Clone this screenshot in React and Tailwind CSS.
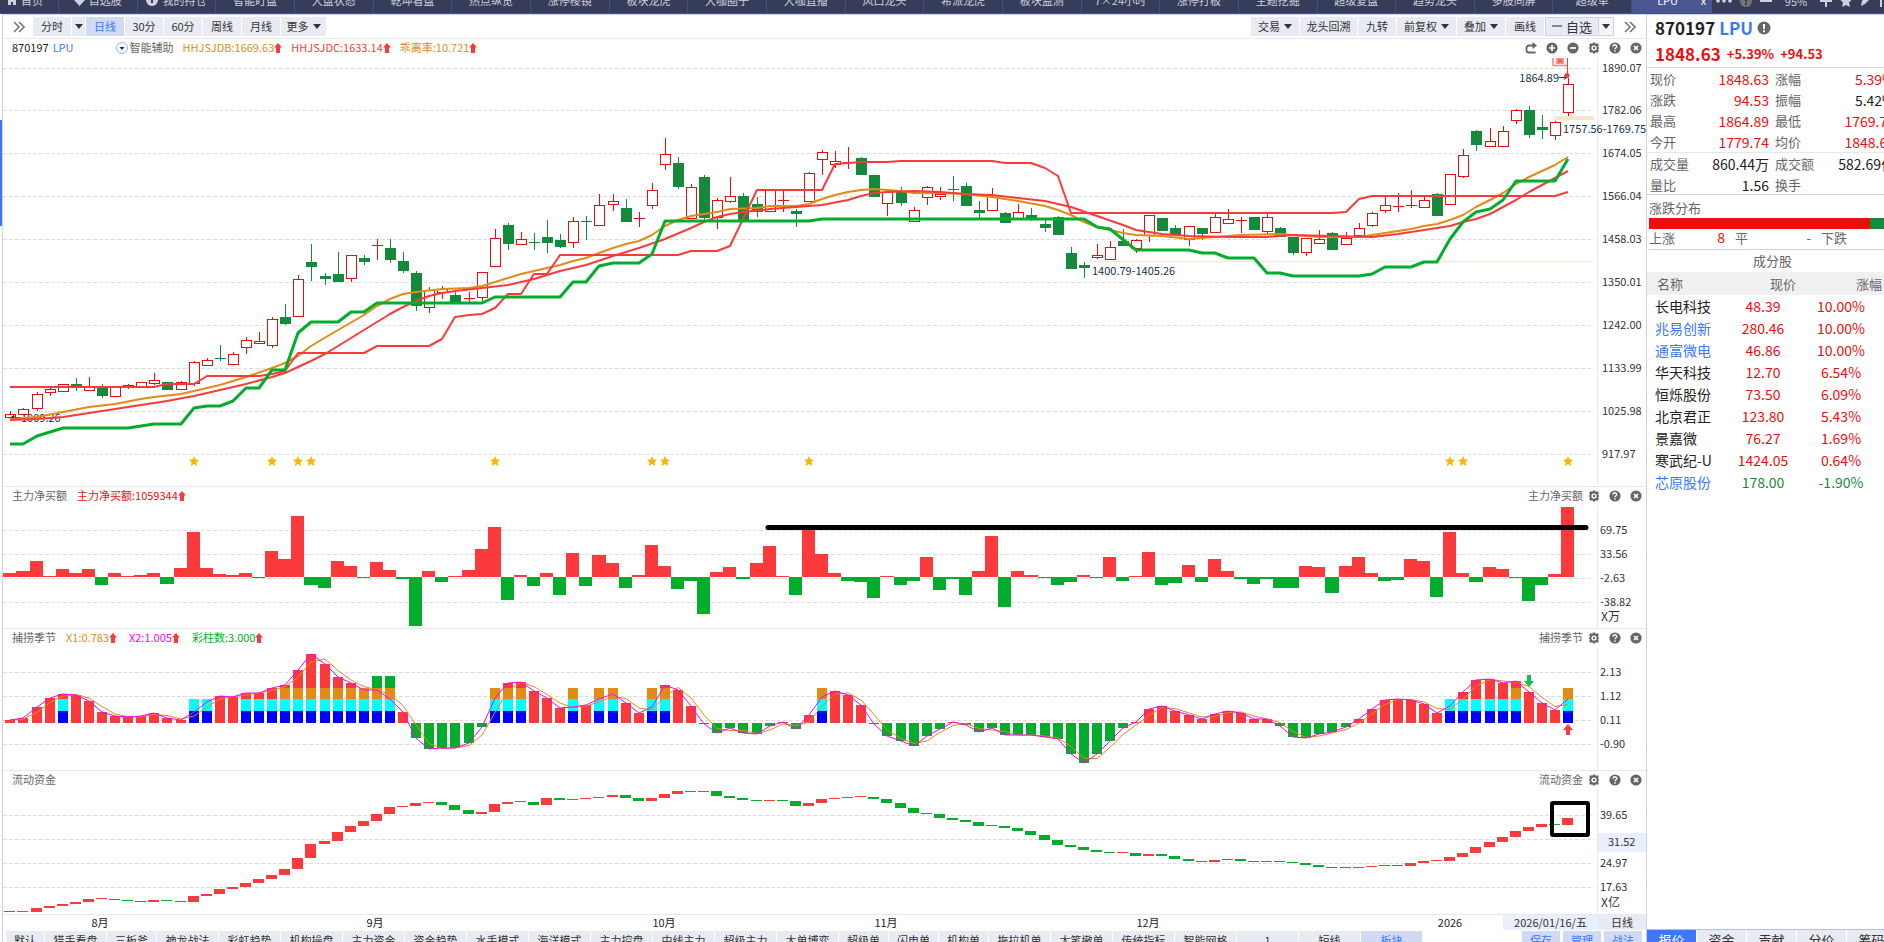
import React from 'react';

const RED = '#fb3b3b';
const GREEN = '#02ad2b';
const UP = '#ee0d0d';
const DOWN = '#168a3c';
const ORANGE = '#e28b16';
const GRID = '#dddddd';

const STEP = 13.09;
const cx = (i) => Math.round(10.4 + i * STEP);

const NAV = [
  '自选股', '我的持仓', '智能盯盘', '大盘状态', '乾坤看盘', '热点纵览', '涨停棱镜', '板块龙虎', '大咖圈子', '大咖直播',
  '风口龙头', '希派龙虎', '板块监测', '7×24小时', '涨停打板', '主题挖掘', '超级复盘', '趋势龙头', '多股同屏', '超级单',
];

// [high, body top, body bottom, low, 1 = up / 0 = down]
const CANDLES = [
  [411, 414, 418, 418, 1], [408, 409, 415, 415, 1], [392, 394, 409, 411, 1], [388, 389, 393, 396, 1], [384, 384, 392, 392, 1],
  [378, 384, 386, 391, 0], [377, 387, 391, 391, 1], [384, 387, 396, 398, 0], [387, 387, 397, 397, 1], [384, 385, 386, 389, 1],
  [382, 382, 387, 387, 1], [373, 380, 384, 385, 1], [382, 382, 390, 390, 0], [381, 382, 390, 390, 1], [361, 362, 384, 386, 1],
  [358, 360, 366, 366, 1], [345, 358, 359, 361, 0], [352, 354, 365, 365, 1], [337, 340, 348, 354, 1], [332, 341, 344, 344, 1],
  [317, 319, 346, 348, 1], [304, 317, 324, 325, 0], [275, 279, 317, 317, 1], [244, 262, 267, 281, 0], [273, 276, 279, 285, 0],
  [252, 274, 282, 282, 0], [255, 255, 279, 282, 1], [255, 258, 262, 265, 0], [239, 245, 245, 260, 1], [239, 248, 260, 263, 0],
  [252, 261, 271, 273, 0], [271, 273, 306, 311, 0], [287, 290, 308, 313, 1], [286, 289, 293, 299, 1], [292, 295, 302, 302, 0],
  [292, 298, 298, 302, 1], [272, 272, 298, 301, 1], [229, 238, 267, 267, 1], [223, 225, 244, 250, 0], [232, 239, 245, 245, 1],
  [233, 242, 242, 250, 0], [220, 237, 243, 253, 0], [234, 240, 247, 248, 0], [217, 221, 243, 248, 1], [216, 221, 221, 240, 0],
  [194, 205, 226, 226, 1], [194, 201, 205, 211, 1], [199, 208, 222, 222, 0], [212, 218, 218, 227, 1], [183, 190, 206, 209, 1],
  [138, 154, 165, 170, 1], [157, 163, 187, 189, 0], [184, 187, 219, 219, 1], [175, 177, 218, 220, 0], [198, 200, 218, 229, 1],
  [177, 196, 202, 203, 1], [193, 196, 221, 221, 0], [197, 204, 212, 217, 0], [190, 190, 212, 212, 1], [190, 200, 200, 212, 1],
  [209, 211, 214, 227, 0], [172, 173, 202, 202, 1], [150, 152, 160, 175, 1], [151, 161, 165, 168, 1], [147, 162, 163, 169, 1],
  [157, 158, 175, 175, 0], [175, 175, 197, 197, 0], [192, 192, 204, 216, 1], [187, 191, 203, 206, 0], [207, 210, 222, 222, 1],
  [186, 187, 198, 205, 1], [187, 194, 197, 200, 1], [176, 189, 189, 201, 0], [183, 186, 206, 206, 0], [201, 210, 213, 219, 0],
  [188, 195, 211, 211, 1], [212, 213, 223, 223, 0], [204, 212, 219, 219, 1], [208, 215, 220, 221, 0], [220, 224, 228, 232, 0],
  [216, 217, 235, 235, 0], [247, 253, 269, 269, 0], [262, 265, 268, 278, 0], [244, 255, 258, 259, 1], [241, 247, 260, 260, 1],
  [229, 241, 246, 246, 0], [239, 240, 249, 253, 1], [215, 215, 236, 242, 1], [218, 218, 231, 231, 0], [225, 228, 235, 236, 0],
  [226, 226, 240, 246, 1], [228, 228, 234, 240, 0], [212, 217, 233, 233, 1], [209, 219, 224, 224, 1], [217, 220, 221, 233, 1],
  [217, 217, 230, 230, 0], [214, 217, 232, 235, 1], [227, 228, 237, 237, 0], [237, 237, 253, 255, 0], [238, 238, 253, 256, 1],
  [230, 239, 244, 244, 1], [232, 233, 250, 250, 0], [232, 238, 245, 245, 1], [223, 228, 236, 236, 1], [212, 213, 226, 227, 1],
  [197, 205, 211, 213, 1], [193, 206, 206, 212, 1], [190, 205, 205, 208, 1], [197, 200, 208, 208, 1], [193, 194, 216, 216, 0],
  [174, 174, 205, 205, 1], [149, 155, 177, 178, 1], [130, 131, 145, 151, 0], [128, 141, 147, 147, 1], [126, 131, 147, 147, 1],
  [109, 110, 121, 124, 1], [106, 110, 135, 138, 0], [115, 127, 130, 139, 0], [121, 122, 136, 140, 1], [78, 84, 113, 116, 1],
];

// [candle index, y]
const SUPPORT = [
  [0, 444], [1, 444], [2, 436], [4, 428], [9, 428], [11, 424], [13, 424], [14, 408], [15, 406], [16, 406], [17, 401], [18, 388],
  [19, 388], [20, 370], [21, 370], [22, 333], [23, 322], [25, 322], [26, 312], [27, 312], [28, 303], [36, 303], [37, 297], [42, 297],
  [43, 282], [44, 282], [45, 266], [46, 263], [48, 263], [49, 254], [50, 221], [61, 221], [62, 219], [82, 219], [83, 227], [84, 229],
  [86, 250], [90, 250], [91, 253], [92, 253], [93, 258], [95, 258], [96, 273], [97, 273], [98, 276], [103, 276], [104, 274],
  [105, 267], [107, 267], [108, 262], [109, 262], [110, 239], [111, 222], [112, 212], [113, 209], [114, 200], [115, 181], [118, 181],
  [119, 159],
];

const CHANNEL = [
  [0, 387], [11, 387], [12, 384], [14, 384], [15, 376], [19, 376], [20, 374], [21, 371], [22, 353], [27, 353], [28, 346], [32, 346],
  [33, 339], [34, 317], [35, 315], [36, 314], [37, 308], [38, 294], [39, 294], [40, 274], [41, 274], [42, 255], [51, 255], [52, 251],
  [54, 251], [55, 246], [57, 190], [62, 190], [63, 164], [65, 162], [67, 162], [68, 161], [75, 161], [76, 163], [78, 163], [79, 168],
  [80, 176], [81, 213], [101, 213], [102, 212], [103, 199], [104, 196], [118, 196], [119, 192],
];

const FAST_MA = [
  [0, 419], [2, 417], [4, 412], [6, 407], [8, 404], [10, 399], [11, 397], [13, 394], [14, 391], [16, 385], [18, 377], [20, 368],
  [21, 363], [22, 356], [23, 346], [25, 330], [27, 315], [28, 306], [29, 299], [30, 294], [31, 292], [33, 289], [35, 288], [36, 286],
  [37, 282], [38, 278], [39, 274], [40, 271], [42, 265], [43, 261], [44, 258], [45, 253], [46, 248], [47, 244], [48, 241], [49, 235],
  [50, 226], [51, 220], [52, 216], [53, 214], [54, 212], [55, 209], [57, 208], [58, 206], [60, 206], [61, 204], [62, 199], [63, 195],
  [64, 192], [65, 190], [66, 189], [67, 190], [68, 191], [69, 193], [71, 193], [73, 194], [75, 197], [77, 201], [79, 206], [80, 210],
  [81, 215], [82, 222], [83, 227], [84, 230], [85, 233], [86, 235], [88, 236], [90, 239], [92, 237], [94, 235], [97, 234], [100, 237],
  [103, 237], [104, 235], [105, 233], [107, 229], [108, 226], [109, 224], [110, 220], [111, 215], [112, 207], [113, 200], [114, 193],
  [115, 184], [116, 177], [117, 171], [118, 165], [119, 157],
];

const SLOW_MA = [
  [0, 420], [2, 419], [4, 417], [6, 413], [8, 409], [10, 405], [12, 401], [14, 396], [16, 390], [18, 384], [20, 377], [21, 373],
  [22, 367], [23, 361], [24, 354], [25, 346], [26, 338], [27, 330], [28, 322], [29, 314], [30, 307], [31, 301], [32, 296], [33, 293],
  [34, 291], [36, 288], [38, 285], [40, 279], [42, 271], [44, 265], [46, 256], [48, 248], [50, 239], [52, 228], [53, 222], [54, 217],
  [55, 214], [56, 212], [58, 209], [60, 207], [62, 205], [64, 200], [65, 196], [66, 193], [67, 192], [69, 191], [71, 192], [73, 194],
  [75, 195], [77, 198], [79, 201], [81, 207], [83, 216], [85, 225], [86, 230], [88, 234], [90, 236], [93, 237], [96, 237], [98, 235],
  [101, 236], [104, 237], [106, 234], [108, 230], [109, 228], [110, 226], [111, 222], [112, 219], [113, 214], [114, 207], [115, 200],
  [116, 192], [117, 185], [118, 178], [119, 171],
];

const STARS = [14, 20, 22, 23, 37, 49, 50, 61, 110, 111, 119];

const NET_BUY = [
  4, 6, 16, 1, 8, 4, 8, -8, 4, 1, 2, 4, -7, 9, 45, 9, 3, 2, 4, -1, 26, 18, 61, -8, -11, 16, 11, -1, 15, 7,
  -2, -49, 6, -5, 1, 7, 28, 50, -23, 2, -9, 4, -18, 24, -9, 22, 14, -11, 2, 32, 11, -12, -4, -37, 5, 10, -2, 14, 31, 1,
  -18, 49, 23, 4, -4, -5, -21, 1, -8, -4, 20, -13, -2, -18, 6, 41, -30, 6, 2, -1, -8, -5, 2, -1, 20, -4, 1, 25, -8, -6,
  12, -5, 18, 6, -2, -7, -2, -11, -11, 11, 10, -16, 11, 20, 4, -4, -3, 18, 16, -20, 45, 4, -5, 10, 8, -1, -24, -8, 3, 70,
];

const SEASON = [
  3, 5, 16, 25, 29, 28, 22, 11, 7, 6, 7, 10, 5, 3, 11, 21, 27, 26, 30, 30, 35, 38, 53, 69, 59, 46, 40, 33, 33, 24,
  11, -15, -26, -25, -25, -20, -4, 25, 40, 41, 32, 25, 15, 16, 18, 24, 29, 20, 10, 16, 38, 33, 17, -1, -10, -5, -10, -11, -3, 1,
  -6, 8, 26, 32, 28, 18, -1, -13, -18, -23, -13, -6, 1, -2, -9, -5, -12, -12, -12, -14, -16, -31, -40, -31, -18, -5, 1, 14, 17, 12,
  8, 4, 9, 12, 10, 4, 4, -3, -14, -15, -11, -9, -4, 4, 14, 23, 24, 23, 19, 10, 17, 31, 43, 44, 40, 42, 31, 20, 13, 24,
];

// number of coloured blocks stacked on a bar
const STACKS = {
  4: 2, 14: 2, 15: 2, 18: 2, 19: 2, 20: 2, 21: 3, 22: 3, 23: 3, 24: 3, 25: 3, 26: 3, 27: 3, 28: 4, 29: 4, 37: 3, 38: 3, 39: 3,
  43: 3, 45: 3, 46: 3, 49: 3, 50: 3, 62: 3, 110: 2, 111: 2, 112: 2, 113: 2, 114: 2, 115: 3, 119: 3,
};

const BLOCKS = [
  [711, 12, '#0000ff'],
  [699, 12, '#00ffff'],
  [688, 11, ORANGE],
  [676, 12, GREEN],
];

const FLOW = [
  [911, 912, 0], [911, 912, 1], [908, 912, 1], [906, 908, 1], [904, 906, 1], [902, 904, 1], [899, 902, 1], [898, 899, 1],
  [899, 900, 0], [900, 901, 0], [901, 902, 0], [900, 902, 1], [900, 901, 0], [901, 902, 0], [896, 902, 1], [894, 896, 1],
  [889, 894, 1], [887, 889, 1], [883, 887, 1], [879, 883, 1], [875, 879, 1], [869, 875, 1], [858, 869, 1], [844, 858, 1],
  [841, 844, 1], [832, 841, 1], [826, 832, 1], [821, 826, 1], [814, 821, 1], [807, 814, 1], [806, 807, 1], [803, 806, 1],
  [802, 803, 1], [802, 805, 0], [805, 810, 0], [810, 814, 0], [812, 814, 1], [804, 812, 1], [802, 804, 1], [801, 802, 1],
  [802, 805, 0], [798, 805, 1], [798, 800, 0], [799, 800, 1], [798, 799, 1], [797, 798, 1], [795, 797, 1], [795, 798, 0],
  [798, 801, 0], [798, 801, 1], [794, 798, 1], [791, 794, 1], [791, 792, 0], [791, 792, 1], [791, 796, 0], [796, 798, 0],
  [798, 800, 0], [800, 801, 0], [800, 801, 1], [800, 801, 0], [801, 806, 0], [803, 806, 1], [799, 803, 1], [798, 799, 1],
  [797, 798, 1], [796, 797, 1], [797, 799, 0], [799, 803, 0], [803, 808, 0], [808, 813, 0], [813, 814, 0], [814, 818, 0],
  [818, 820, 0], [820, 822, 0], [822, 826, 0], [825, 826, 0], [826, 828, 0], [828, 831, 0], [831, 835, 0], [835, 840, 0],
  [840, 845, 0], [845, 847, 0], [847, 850, 0], [850, 852, 0], [852, 853, 0], [852, 853, 1], [853, 856, 0], [854, 856, 1],
  [854, 856, 0], [856, 859, 0], [859, 861, 0], [861, 862, 0], [860, 862, 1], [859, 860, 1], [859, 861, 0], [861, 862, 0],
  [861, 862, 1], [861, 862, 0], [862, 863, 0], [863, 865, 0], [865, 867, 0], [867, 868, 0], [867, 868, 0], [867, 868, 1],
  [866, 867, 1], [865, 866, 0], [865, 866, 0], [863, 866, 1], [861, 863, 1], [860, 861, 1], [857, 861, 1], [853, 857, 1],
  [847, 853, 1], [842, 847, 1], [837, 842, 1], [831, 837, 1], [827, 831, 1], [824, 827, 1], [824, 825, 0], [818, 825, 1],
];

const STOCKS = [
  ['长电科技', '48.39', '10.00%'],
  ['兆易创新', '280.46', '10.00%', true],
  ['通富微电', '46.86', '10.00%', true],
  ['华天科技', '12.70', '6.54%'],
  ['恒烁股份', '73.50', '6.09%'],
  ['北京君正', '123.80', '5.43%'],
  ['景嘉微', '76.27', '1.69%'],
  ['寒武纪-U', '1424.05', '0.64%'],
  ['芯原股份', '178.00', '-1.90%', true],
];

const TEMPLATES = [
  '猎手看盘', '三板斧', '神龙战法', '彩虹趋势', '机构操盘', '主力资金', '资金趋势', '水手模式', '海洋模式', '主力控盘', '中线主力',
  '超级主力', '大单博弈', '超级单', '闪电单', '机构单', '拖拉机单', '大笔撤单', '传统指标', '智能网格', '1', '短线',
];

const toPoints = (list) => list.map(([i, y]) => `${cx(i)},${y}`).join(' ');

/* ---------- icons ---------- */

const Caret = () => (
  <svg className="w-2 h-[5px] shrink-0" viewBox="0 0 8 5"><path d="M0 0h8L4 5z" fill="#333" /></svg>
);

const Chevrons = () => (
  <svg className="w-3 h-3" viewBox="0 0 12 12" fill="none" stroke="#777" strokeWidth="1.6">
    <path d="M1 1l5 5-5 5M6 1l5 5-5 5" />
  </svg>
);

const UpArrow = () => (
  <svg className="w-2 h-[10px] shrink-0" viewBox="0 0 8 10"><path d="M4 0L8 4.500H6V10H2V4.500H0z" fill={RED} /></svg>
);

const Round = ({ children }) => (
  <svg className="w-3 h-3" viewBox="0 0 12 12">
    <circle cx="6" cy="6" r="5.6" fill="#666" />
    <g stroke="#fff" strokeWidth="1.7" fill="none">{children}</g>
  </svg>
);

const Gear = () => (
  <svg className="w-3 h-3" viewBox="0 0 12 12">
    <path
      d="M2.2 1.2L4.4 1.8 5 .6h2l.6 1.2 2.2-.6 1 1.8L10 4.8l1.4 1.2L10 7.2l.8 1.8-1 1.8-2.2-.6L7 11.4H5l-.6-1.2-2.2.6-1-1.8.8-1.8L.6 6 2 4.8 1.2 3z"
      fill="#666"
    />
    <circle cx="6" cy="6" r="2.6" fill="#fff" />
    <circle cx="6" cy="6" r="1.2" fill="#666" />
  </svg>
);

const Help = () => (
  <Round><path d="M4.2 4.7c0-2.6 3.6-2.4 3.6-.3C7.8 5.6 6 5.8 6 7.2M6 8.2v1.5" strokeWidth="1.4" /></Round>
);

const Close = () => <Round><path d="M4 4l4 4M8 4l-4 4" /></Round>;

const IconButton = ({ label, children }) => (
  <button type="button" aria-label={label} className="w-[21px] flex justify-center">{children}</button>
);

const PanelTools = ({ title }) => (
  <div className="ml-auto flex items-center">
    {title && <span className="text-[#666]">{title}</span>}
    <IconButton label="设置"><Gear /></IconButton>
    <IconButton label="帮助"><Help /></IconButton>
    <IconButton label="关闭"><Close /></IconButton>
  </div>
);

/* ---------- chart pieces ---------- */

const Axis = ({ top, bottom, ticks, x = 1600 }) => (
  <g>
    {ticks.map(([y, label]) => (
      <g key={y}>
        <path d={`M3 ${y + 0.5}H1594`} stroke={GRID} strokeDasharray="4 2" />
        {label && <text x={x} y={y + 4} fill="#333">{label}</text>}
      </g>
    ))}
    <path d={`M1597.5 ${top}V${bottom}`} stroke="#e6e8f0" />
  </g>
);

const Candle = ({ i, data: [high, top, bottom, low, up] }) => {
  const x = cx(i);
  const h = bottom - top;
  if (up && h > 1) {
    return (
      <g stroke={UP} fill="none">
        <path d={`M${x + 0.5} ${high}V${top}M${x + 0.5} ${bottom}V${low}`} />
        <rect x={x - 4.5} y={top + 0.5} width="10" height={h - 1} fill="#fff" />
      </g>
    );
  }
  return (
    <g fill={up ? UP : DOWN}>
      <rect x={x} y={high} width="1" height={low - high} />
      <rect x={x - 5} y={top} width="11" height={Math.max(h, 1)} />
    </g>
  );
};

const MainChart = () => (
  <svg className="block w-full text-[11px]" viewBox="3 58 1643 428">
    <Axis
      top={58}
      bottom={485}
      x={1602}
      ticks={[
        [68, '1890.07'], [110, '1782.06'], [153, '1674.05'], [196, '1566.04'], [239, '1458.03'],
        [282, '1350.01'], [325, '1242.00'], [368, '1133.99'], [411, '1025.98'], [454, '917.97'],
      ]}
    />
    <path d="M1084 261.5H1594" stroke="#fde6cf" />
    <rect x="1555" y="116" width="39" height="4" fill="#fde4cb" />
    {CANDLES.map((c, i) => <Candle key={i} i={i} data={c} />)}
    <g fill="#15324a">
      <path d="M11 417.5H21M11 417.5l3-2v4z" stroke="#15324a" />
      <text x="21" y="422">1009.26</text>
      <text x="1092" y="275">1400.79-1405.26</text>
      <text x="1559" y="82" textAnchor="end">1864.89</text>
      <path d="M1559 77.5h7M1564 75.5l3 2-3 2" stroke="#15324a" fill="none" />
      <text x="1563" y="133">1757.56-1769.75</text>
    </g>
    <g fill="none" strokeLinejoin="round">
      <polyline points={toPoints(FAST_MA)} stroke={ORANGE} strokeWidth="2" />
      <polyline points={toPoints(SLOW_MA)} stroke={RED} strokeWidth="2" />
      <polyline points={toPoints(CHANNEL)} stroke={RED} strokeWidth="2" />
      <polyline points={toPoints(SUPPORT)} stroke={GREEN} strokeWidth="3" />
    </g>
    <path d="M1553 58V65.5H1568" stroke="#fb8080" strokeWidth="1.5" fill="none" />
    <rect x="1556" y="58" width="8" height="6" fill="#fb9090" />
    <path d="M1558 60h4M1558 62h4" stroke="#e84040" />
    <path d="M1567.5 58V75" stroke={RED} />
    <circle cx="1567" cy="75.500" r="2.500" fill={RED} />
    {STARS.map((i) => (
      <path
        key={i}
        transform={`translate(${cx(i)} 461)`}
        d="M0-5L1.500-1.600 5-1.300 2.400 1.200 3.200 5 0 3-3.200 5-2.400 1.200-5-1.300-1.500-1.600z"
        fill="#f7b500"
      />
    ))}
  </svg>
);

const NetBuyChart = () => (
  <svg className="block w-full text-[11px]" viewBox="3 506 1643 122">
    <Axis top={506} bottom={627} ticks={[[530, '69.75'], [554, '33.56'], [578, '-2.63'], [602, '-38.82']]} />
    <text x="1601" y="621" className="text-[12px]" fill="#333">X万</text>
    {NET_BUY.map((v, i) => {
      const x = cx(i) - 7;
      return (
        <rect key={i} x={x} y={v > 0 ? 577 - v : 577} width={cx(i + 1) - 7 - x} height={Math.abs(v)} fill={v > 0 ? RED : GREEN} />
      );
    })}
    <path d="M768 527.500H1586" stroke="#000" strokeWidth="5" strokeLinecap="round" />
  </svg>
);

const SeasonChart = () => {
  const fast = SEASON.map((v, i) => [i, 723 - v]);
  const slow = SEASON.map((v, i) => [i, 723 - (v + (i ? SEASON[i - 1] : v)) / 2]);
  return (
    <svg className="block w-full text-[11px]" viewBox="3 648 1643 122">
      <Axis top={648} bottom={769} ticks={[[672, '2.13'], [696, '1.12'], [720, '0.11'], [744, '-0.90']]} />
      {SEASON.map((v, i) => (
        <g key={i}>
          <rect x={cx(i) - 5} y={v > 0 ? 723 - v : 723} width="10" height={Math.abs(v)} fill={v > 0 ? RED : GREEN} />
          {BLOCKS.slice(0, STACKS[i] || 0).map(([y, h, fill]) => (
            <rect key={y} x={cx(i) - 5} y={y} width="10" height={h} fill={fill} />
          ))}
        </g>
      ))}
      <polyline points={toPoints(slow)} fill="none" stroke={ORANGE} />
      <polyline points={toPoints(fast)} fill="none" stroke="#ff00ff" />
      <path d="M1527 675h4v6h3l-5 6-5-6h3z" fill="#12c152" />
      <path d="M1566 735h4v-5h3l-5-6-5 6h3z" fill={RED} />
    </svg>
  );
};

const FlowChart = () => (
  <svg className="block w-full text-[11px]" viewBox="3 790 1643 124">
    <rect x="1598" y="833" width="48" height="19" fill="#e9effc" />
    <Axis top={790} bottom={913} ticks={[[815, '39.65'], [839, ''], [863, '24.97'], [887, '17.63']]} />
    <text x="1608" y="846" fill="#333">31.52</text>
    <text x="1601" y="907" className="text-[12px]" fill="#333">X亿</text>
    {FLOW.map(([top, bottom, up], i) => (
      <rect key={i} x={cx(i) - 6} y={top} width="11" height={bottom - top} fill={up ? RED : GREEN} />
    ))}
    <rect x="1552" y="803" width="36" height="32" rx="1" fill="none" stroke="#000" strokeWidth="4" />
  </svg>
);

const Panel = ({ children }) => <section className="border-t border-[#e6e8f0]">{children}</section>;

const PanelHeader = ({ children }) => (
  <div className="h-[19px] pl-[9px] pb-[2px] flex items-center leading-none whitespace-nowrap">{children}</div>
);

const Reading = ({ className, children }) => (
  <span className={`flex items-center ${className}`}>{children}<UpArrow /></span>
);

/* ---------- bars ---------- */

const TopBar = () => (
  <header className="h-[14px] shrink-0 flex items-end overflow-hidden bg-[#363c59] border-b border-[#434f8c] text-[11px] text-[#cfd2dc] whitespace-nowrap">
    <nav className="flex-1 h-[26px] flex">
      <a href="#home" className="w-[59px] pr-2 flex items-center justify-center gap-1 border-r border-[#43507c]">
        <svg className="w-[10px] h-[10px]" viewBox="0 0 10 10"><path d="M5 0l5 5H9v5H6V7H4v3H1V5H0z" fill="#cfd2dc" /></svg>
        首页
      </a>
      {NAV.map((item, i) => (
        <a key={item} href={`#${item}`} className="flex-1 flex items-center justify-center gap-1 border-r border-[#43507c]">
          {i === 0 && (
            <svg className="w-[11px] h-[11px]" viewBox="0 0 11 11"><path d="M5.500 11L0 5V2l2-2h2l1.500 1L7 0h2l2 2v3z" fill="#cfd2dc" /></svg>
          )}
          {i === 1 && (
            <svg className="w-3 h-3" viewBox="0 0 12 12">
              <circle cx="6" cy="6" r="6" fill="#cfd2dc" />
              <path d="M6 3v6" stroke="#363c59" strokeWidth="2" />
            </svg>
          )}
          {item}
        </a>
      ))}
      <a href="#LPU" className="w-20 flex items-center justify-between pl-[25px] pr-[6px] bg-[#4a5690] text-white">
        LPU<span>x</span>
      </a>
    </nav>
    <div className="w-[172px] h-6 flex items-center gap-2 pl-1 shrink-0 overflow-hidden">
      <svg className="w-4 h-3 shrink-0" viewBox="0 0 16 12" fill="#cfd2dc">
        <circle cx="2" cy="6" r="1.800" /><circle cx="8" cy="6" r="1.800" /><circle cx="14" cy="6" r="1.800" />
      </svg>
      <svg className="w-3 h-3 shrink-0" viewBox="0 0 12 12">
        <circle cx="6" cy="6" r="6" fill="#77736e" />
        <path d="M6 2v5M6 8v2" stroke="#363c59" strokeWidth="2" />
      </svg>
      <svg className="w-3 h-3 shrink-0" viewBox="0 0 12 12"><path d="M0 6h12" stroke="#cfd2dc" strokeWidth="2" /></svg>
      <span className="w-8 text-center shrink-0">95%</span>
      <svg className="w-3 h-3 shrink-0" viewBox="0 0 12 12"><path d="M0 6h12M6 0v12" stroke="#cfd2dc" strokeWidth="2" /></svg>
      <svg className="w-3 h-3 shrink-0" viewBox="-6 -6 12 12"><path d="M0-6l2 4 4 .5-3 3L4 6 0 4-4 6l1-4.500-3-3L-2-2z" fill="#cfd2dc" /></svg>
      <svg className="w-3 h-3 shrink-0" viewBox="0 0 12 12"><path d="M1 11l1-5 6-6 3 3-6 6z" fill="#cfd2dc" /></svg>
      <svg className="w-3 h-3 shrink-0" viewBox="0 0 12 12"><path d="M1 12V3h10" fill="none" stroke="#cfd2dc" strokeWidth="2" /></svg>
    </div>
  </header>
);

const ToolButton = ({ width = 'w-[38px]', active, caret, children }) => (
  <button
    type="button"
    className={`${width} h-[19px] pb-px flex items-center justify-center gap-1 leading-none ${active ? 'bg-[#d0daf5] text-[#3b78fb]' : 'bg-[#e9ebf4]'}`}
  >
    {children}
    {caret && <Caret />}
  </button>
);

const Toolbar = () => (
  <div className="h-6 flex items-center gap-px border-t border-[#d3d6ea] pr-[10px] whitespace-nowrap">
    <button type="button" aria-label="展开" className="w-[29px] pl-[10px]"><Chevrons /></button>
    <ToolButton>分时</ToolButton>
    <ToolButton width="w-[13px]"><Caret /></ToolButton>
    <ToolButton active>日线</ToolButton>
    <ToolButton>30分</ToolButton>
    <ToolButton>60分</ToolButton>
    <ToolButton>周线</ToolButton>
    <ToolButton>月线</ToolButton>
    <ToolButton width="w-[45px]" caret>更多</ToolButton>
    <div className="ml-auto flex items-center gap-px">
      <ToolButton width="w-12" caret>交易</ToolButton>
      <ToolButton width="w-[57px]">龙头回溯</ToolButton>
      <ToolButton>九转</ToolButton>
      <ToolButton width="w-[59px]" caret>前复权</ToolButton>
      <ToolButton width="w-12" caret>叠加</ToolButton>
      <ToolButton>画线</ToolButton>
      <div className="flex border border-[#cdd2e8]">
        <button type="button" className="w-[52px] h-[17px] pb-px flex items-center justify-center gap-1 bg-[#e9ebf4] text-[13px] leading-none">
          <span className="w-[10px] h-[2px] bg-[#888]" />
          自选
        </button>
        <button type="button" aria-label="更多自选" className="w-[15px] flex items-center justify-center bg-[#f4f5fa] border-l border-[#cdd2e8]">
          <Caret />
        </button>
      </div>
      <button type="button" aria-label="收起" className="pl-[9px]"><Chevrons /></button>
    </div>
  </div>
);

const MONTHS = [[100, '8月'], [375, '9月'], [664, '10月'], [886, '11月'], [1148, '12月'], [1450, '2026']];

const DateRow = () => (
  <div className="h-[17px] flex items-start border-t border-[#e6e8f0]">
    <svg className="flex-1 h-4 text-[11px]" viewBox="3 914 1500 16">
      {MONTHS.map(([x, label]) => <text key={x} x={x} y="926" textAnchor="middle" fill="#222">{label}</text>)}
    </svg>
    <div className="w-[95px] h-[15px] pb-px flex items-center justify-center bg-[#e9effc] leading-none">2026/01/16/五</div>
    <div className="w-12 h-[15px] pb-px flex items-center justify-center bg-[#e9ebf4] leading-none">日线</div>
  </div>
);

const TAB_WIDTHS = { 1: 'w-[61px]', 2: 'w-[61px]', 3: 'w-[49px]', 4: 'w-[61px]' };

const TemplateTabs = () => (
  <div className="h-[18px] pl-[3px] pr-1 flex gap-px whitespace-nowrap leading-none">
    <button type="button" className="w-[38px] shrink-0 bg-[#e9ebf4]">默认</button>
    {TEMPLATES.map((name) => (
      <button key={name} type="button" className={`${TAB_WIDTHS[name.length]} shrink-0 bg-[#e9ebf4]`}>{name}</button>
    ))}
    <button type="button" className="w-[61px] shrink-0 bg-[#d0daf5] text-[#3b78fb]">板块</button>
    <div className="ml-auto flex gap-[3px] text-[#3b78fb]">
      <button type="button" className="w-[38px] bg-[#d0daf5]">保存</button>
      <button type="button" className="w-[38px] bg-[#d0daf5]">管理</button>
      <button type="button" className="w-[38px] bg-[#d0daf5]">战法</button>
    </div>
  </div>
);

/* ---------- quote panel ---------- */

const QuoteRow = ({ cells: [a, av, b, bv], red = [true, true] }) => (
  <div className="h-[21px] w-[248px] pl-[3px] flex items-center">
    <span className="w-12 text-[13px] text-[#666]">{a}</span>
    <span className={`w-[71px] text-right ${red[0] ? 'text-[#ee0d0d]' : 'text-[#222]'}`}>{av}</span>
    <span className="w-12 ml-[6px] text-[13px] text-[#666]">{b}</span>
    <span className={`flex-1 text-right ${red[1] ? 'text-[#ee0d0d]' : 'text-[#222]'}`}>{bv}</span>
  </div>
);

const QuotePanel = () => (
  <aside className="w-[238px] shrink-0 flex flex-col overflow-hidden border-l border-t border-[#cdd2e8] text-[14px] leading-none whitespace-nowrap">
    <div className="h-[53px] shrink-0 pl-2 border-b border-[#d8dbea]">
      <h1 className="h-[25px] flex items-center gap-1 text-[17px] font-bold text-[#222]">
        870197 <span className="text-[#3b78fb]">LPU</span>
        <svg className="w-[14px] h-[14px]" viewBox="0 0 14 14">
          <circle cx="7" cy="7" r="6.500" fill="#666" />
          <path d="M7 3v5M7 9.200v2" stroke="#fff" strokeWidth="2" />
        </svg>
      </h1>
      <p className="h-[26px] flex items-center gap-[6px] font-bold text-[#ee0d0d]">
        <span className="text-[17px]">1848.63</span>
        <span className="text-[13px]">+5.39%</span>
        <span className="text-[13px]">+94.53</span>
      </p>
    </div>
    <div className="border-b border-[#e6e8f0]">
      <QuoteRow cells={['现价', '1848.63', '涨幅', '5.39%']} />
      <QuoteRow cells={['涨跌', '94.53', '振幅', '5.42%']} red={[true, false]} />
      <QuoteRow cells={['最高', '1864.89', '最低', '1769.75']} />
      <QuoteRow cells={['今开', '1779.74', '均价', '1848.63']} />
    </div>
    <div className="h-[42px] shrink-0 border-b border-[#cdd2e8]">
      <QuoteRow cells={['成交量', '860.44万', '成交额', '582.69亿']} red={[false, false]} />
      <QuoteRow cells={['量比', '1.56', '换手', '']} red={[false, false]} />
    </div>
    <div className="ml-[2px] border-b border-[#cdd2e8] text-[13px] text-[#666]">
      <div className="h-[23px] flex items-end pb-1">涨跌分布</div>
      <div className="h-[11px] flex">
        <div className="w-[221px] bg-[#ee0d0d]" />
        <div className="flex-1 bg-[#168a3c]" />
      </div>
      <div className="h-5 pb-1 flex items-center">
        <span className="w-12">上涨</span>
        <span className="w-7 text-right text-[14px] text-[#ee0d0d]">8</span>
        <span className="w-12 ml-[10px]">平</span>
        <span className="w-7 text-right text-[#168a3c]">-</span>
        <span className="ml-[10px]">下跌</span>
      </div>
    </div>
    <table className="w-full table-fixed border-collapse">
      <caption className="h-[22px] pl-[14px] text-[13px] leading-[22px] text-[#666]">成分股</caption>
      <thead>
        <tr className="h-[23px] bg-[#f0f0f0] text-[13px] text-[#666]">
          <th className="w-[78px] pl-[10px] pb-px text-left font-normal">名称</th>
          <th className="w-[76px] pr-[5px] pb-px text-right font-normal">现价</th>
          <th className="pr-[2px] pb-px text-right font-normal">涨幅</th>
        </tr>
      </thead>
      <tbody className="text-center text-[#ee0d0d]">
        {STOCKS.map(([name, price, change, held]) => (
          <tr key={name} className={change.startsWith('-') ? 'h-[22px] text-[#168a3c]' : 'h-[22px]'}>
            <td className={`pl-2 text-left ${held ? 'text-[#3b78fb]' : 'text-[#222]'}`}>{name}</td>
            <td>{price}</td>
            <td className="pr-[3px]">{change}</td>
          </tr>
        ))}
      </tbody>
    </table>
    <div className="mt-auto h-[13px] shrink-0 flex items-start gap-px overflow-hidden border-t border-[#b9c0dc] text-[13px]">
      <button type="button" className="w-[49px] h-[18px] shrink-0 bg-[#3b78fb] text-white">报价</button>
      {['资金', '贡献', '分价', '筹码'].map((name) => (
        <button key={name} type="button" className="w-[49px] h-[18px] shrink-0 bg-[#e9ebf4]">{name}</button>
      ))}
    </div>
  </aside>
);

export default function App() {
  return (
    <div className="h-screen flex flex-col overflow-hidden bg-white text-[11px] text-[#333] font-['Noto_Sans_CJK_SC',sans-serif]">
      <TopBar />
      <div className="flex-1 min-h-0 flex">
        <div className="w-[3px] shrink-0 pt-[106px] border-r border-[#cdd2e8]">
          <div className="h-[106px] bg-[#3b78fb]" />
        </div>
        <main className="flex-1 min-w-0">
          <Toolbar />
          <Panel>
            <PanelHeader>
              <span className="text-[#222]">870197</span>
              <span className="ml-1 text-[#3b78fb]">LPU</span>
              <button type="button" className="ml-[42px] flex items-center gap-[2px] text-[#666]">
                <svg className="w-3 h-3" viewBox="0 0 12 12">
                  <circle cx="6" cy="6" r="5.500" fill="#f2f8fd" stroke="#9db4c8" />
                  <path d="M3.500 5h5L6 8z" fill="#15324a" />
                </svg>
                智能辅助
              </button>
              <div className="ml-[9px] flex gap-[9px]">
                <Reading className="text-[#e28b16]">HHJSJDB:1669.63</Reading>
                <Reading className="text-[#fb3b3b]">HHJSJDC:1633.14</Reading>
                <Reading className="text-[#e28b16]">乖离率:10.721</Reading>
              </div>
              <div className="ml-auto flex items-center">
                <IconButton label="重做">
                  <svg className="w-3 h-3" viewBox="0 0 12 12">
                    <path d="M9 3.500H4Q1.500 3.500 1.500 6v2.500Q1.500 10.500 4 10.500h6.500" fill="none" stroke="#666" strokeWidth="1.800" />
                    <path d="M7.500 0l4.500 3.500-4.500 3.500z" fill="#666" />
                  </svg>
                </IconButton>
                <IconButton label="放大"><Round><path d="M6 3v6M3 6h6" /></Round></IconButton>
                <IconButton label="缩小"><Round><path d="M3 6h6" /></Round></IconButton>
                <PanelTools />
              </div>
            </PanelHeader>
            <MainChart />
          </Panel>
          <Panel>
            <PanelHeader>
              <span className="text-[#666]">主力净买额</span>
              <Reading className="ml-[10px] text-[#ee0d0d]">主力净买额:1059344</Reading>
              <PanelTools title="主力净买额" />
            </PanelHeader>
            <NetBuyChart />
          </Panel>
          <Panel>
            <PanelHeader>
              <span className="text-[#666]">捕捞季节</span>
              <div className="ml-[10px] flex gap-[12px]">
                <Reading className="text-[#e28b16]">X1:0.783</Reading>
                <Reading className="text-[#ff00ff]">X2:1.005</Reading>
                <Reading className="text-[#02ad2b]">彩柱数:3.000</Reading>
              </div>
              <PanelTools title="捕捞季节" />
            </PanelHeader>
            <SeasonChart />
          </Panel>
          <Panel>
            <PanelHeader>
              <span className="text-[#666]">流动资金</span>
              <PanelTools title="流动资金" />
            </PanelHeader>
            <FlowChart />
          </Panel>
          <DateRow />
          <TemplateTabs />
        </main>
        <QuotePanel />
      </div>
    </div>
  );
}
